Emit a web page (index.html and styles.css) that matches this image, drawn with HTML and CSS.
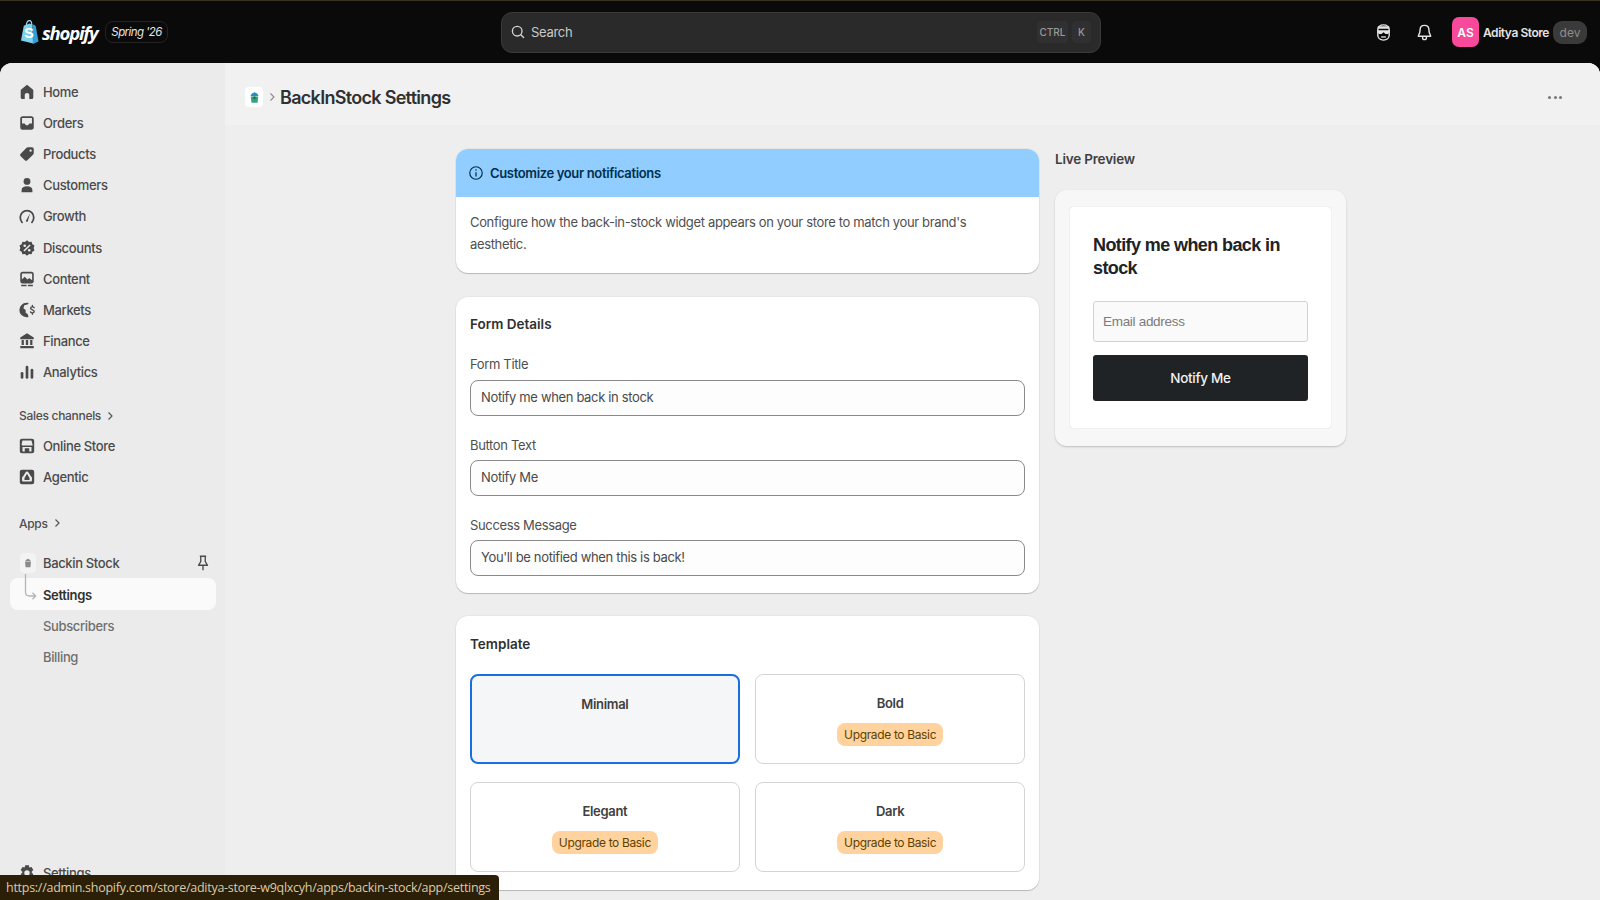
FILE: index.html
```html
<!DOCTYPE html>
<html lang="en">
<head>
  <meta charset="UTF-8" />
  <title>BackInStock Settings - Shopify</title>
  <link rel="stylesheet" href="styles.css">
</head>
<body>

  <!-- Top bar -->
  <header class="topbar">
    <div class="brand">
      <svg class="brand-bag" viewBox="0 0 20 26">
        <path fill="#7fd0ee" d="M1 22 4 6.500 10 4l3 1 1 20z"/>
        <path fill="#2f9fd6" d="M13 5l2.600.6 1 1.600L19.500 23 13.500 25.500z"/>
        <path fill="none" stroke="#9fdcf2" stroke-width="1.200" d="M6.500 6.500C6.800 3 8.400 1 10 1s2.400 2 2.400 4.500"/>
        <text x="4.500" y="19" class="brand-s">S</text>
      </svg>
      <span class="brand-name">shopify</span>
      <span class="brand-tag">Spring '26</span>
    </div>

    <div class="search">
      <svg class="search-icon" viewBox="0 0 20 20"><circle cx="9" cy="9" r="6" fill="none" stroke="#d4d4d4" stroke-width="1.700"/><path d="M13.500 13.500 17 17" stroke="#d4d4d4" stroke-width="1.700" stroke-linecap="round"/></svg>
      <span class="search-text">Search</span>
      <span class="key key-ctrl">CTRL</span>
      <span class="key">K</span>
    </div>

    <div class="top-actions">
      <svg class="top-icon top-icon-face" viewBox="0 0 20 20">
        <path fill="none" stroke="#e3e3e3" stroke-width="1.500" d="M4 7c0-3 2.500-5 6-5s6 2 6 5v6c0 3-2.500 5-6 5s-6-2-6-5z"/>
        <path fill="#e3e3e3" d="M4 3.500h12V6H4zM3.500 7.500h13v2.200l-2 1.800h-2.400L10 9.800l-2.100 1.700H5.500l-2-1.800z"/>
        <path fill="#e3e3e3" d="M7.500 14h5v1.400h-5z"/>
      </svg>
      <svg class="top-icon top-icon-bell" viewBox="0 0 20 20">
        <path fill="none" stroke="#e3e3e3" stroke-width="1.500" stroke-linejoin="round" d="M10 2.500c-3 0-4.700 2.200-4.700 5 0 3.500-1.800 5-1.800 6.500h13c0-1.500-1.800-3-1.800-6.500 0-2.800-1.700-5-4.700-5z"/>
        <path fill="none" stroke="#e3e3e3" stroke-width="1.500" d="M8 14.500v1.200c0 1 1 1.800 2 1.800s2-.8 2-1.800v-1.200"/>
      </svg>
      <span class="avatar">AS</span>
      <span class="store-name">Aditya Store</span>
      <span class="dev-pill">dev</span>
    </div>
  </header>

  <div class="shell">
    <!-- Sidebar -->
    <nav class="sidebar">
      <a class="nav-item"><svg class="nav-icon" viewBox="0 0 20 20"><path d="M10 2 3.500 7.200C3 7.600 3 8 3 8.600V16c0 1 .7 1.700 1.700 1.700H7.500V13c0-1 1-2 2.500-2s2.500 1 2.500 2v4.700h2.800c1 0 1.700-.7 1.700-1.700V8.600c0-.6 0-1-.5-1.400z"/></svg>Home</a>
      <a class="nav-item"><svg class="nav-icon" viewBox="0 0 20 20"><path fill-rule="evenodd" d="M5 2.500h10c1.400 0 2.500 1.100 2.500 2.500v10c0 1.400-1.100 2.500-2.500 2.500H5A2.500 2.500 0 0 1 2.500 15V5C2.500 3.600 3.600 2.500 5 2.500zM4.500 10.500h3c.4 1.200 1.300 2 2.500 2s2.100-.8 2.500-2h3V5c0-.3-.2-.5-.5-.5H5c-.3 0-.5.2-.5.5z"/></svg>Orders</a>
      <a class="nav-item"><svg class="nav-icon" viewBox="0 0 20 20"><path fill-rule="evenodd" d="M11 2.500h4.500c1.100 0 2 .9 2 2V9c0 .6-.2 1.100-.6 1.500l-6.500 6.500c-.8.8-2 .8-2.800 0L3 12.400c-.8-.8-.8-2 0-2.800l6.500-6.500c.4-.4 1-.6 1.500-.6zM14 7.500a1.300 1.300 0 1 0 0-2.600 1.300 1.300 0 0 0 0 2.600z"/></svg>Products</a>
      <a class="nav-item"><svg class="nav-icon" viewBox="0 0 20 20"><circle cx="10" cy="6" r="3.800"/><path d="M4 18v-2.500C4 13 6.500 11.500 10 11.500s6 1.500 6 4V18z"/></svg>Customers</a>
      <a class="nav-item"><svg class="nav-icon" viewBox="0 0 20 20"><path fill="none" stroke="#4a4a4a" stroke-width="2" stroke-linecap="round" d="M4.500 17C3 15.500 2.500 13.500 2.500 11.500a7.500 7.500 0 0 1 15 0c0 2-.5 4-2 5.500"/><path d="M13.500 7 10.800 16c-.3 1-2.300.5-2-.7z"/></svg>Growth</a>
      <a class="nav-item"><svg class="nav-icon" viewBox="0 0 20 20"><path fill-rule="evenodd" d="M10 1.500l2.300 1.700 2.800-.2.9 2.700 2.300 1.600-.9 2.700.9 2.700-2.300 1.600-.9 2.700-2.800-.2L10 18.500l-2.300-1.700-2.800.2-.9-2.700-2.300-1.600.9-2.700-.9-2.700L4 5.700l.9-2.700 2.800.2zM12.800 6 6 12.800 7.200 14 14 7.200zM7.500 9a1.500 1.500 0 1 0 0-3 1.500 1.500 0 0 0 0 3zm5 5a1.500 1.500 0 1 0 0-3 1.500 1.500 0 0 0 0 3z"/></svg>Discounts</a>
      <a class="nav-item"><svg class="nav-icon" viewBox="0 0 20 20"><path fill-rule="evenodd" d="M5 2h10c1.400 0 2.500 1.100 2.500 2.500v8c0 1.400-1.100 2.500-2.500 2.500H5a2.500 2.500 0 0 1-2.500-2.500v-8C2.500 3.100 3.600 2 5 2zm-.7 8.500 3.200-3 3 3 2-1.500 3.200 2.500V4.500c0-.3-.4-.7-.7-.7H5c-.3 0-.7.4-.7.7zM3.500 16.500h6V18h-6zm7.500 0h5.500V18H11z"/></svg>Content</a>
      <a class="nav-item"><svg class="nav-icon" viewBox="0 0 20 20"><path d="M9.500 2a8 8 0 0 0 0 16c.8 0 1.500-.1 2.200-.3l-1-3.200-2.200-1.500V10L6 8l1-3.300 3.500-.8L12 2.400C11.200 2.100 10.400 2 9.500 2z"/><path fill="none" stroke="#4a4a4a" stroke-width="1.500" stroke-linecap="round" d="M18 7.500c-.4-.8-1.200-1-2-1-1 0-2 .5-2 1.600 0 2.200 4 1.300 4 3.500 0 1-1 1.600-2 1.600-.9 0-1.700-.3-2-1M16 5v1.500M16 13.200v1.500"/></svg>Markets</a>
      <a class="nav-item"><svg class="nav-icon" viewBox="0 0 20 20"><path d="M10 1.500 2.500 6v2h15V6zM2.500 15.500h15V18h-15z"/><path d="M4 9h2.500v5.500H4zM8.700 9h2.600v5.500H8.700zM13.500 9H16v5.500h-2.500z"/></svg>Finance</a>
      <a class="nav-item"><svg class="nav-icon" viewBox="0 0 20 20"><rect x="3" y="10" width="3" height="7.500" rx="1.500"/><rect x="8.500" y="3" width="3" height="14.500" rx="1.500"/><rect x="14" y="6.500" width="3" height="11" rx="1.500"/></svg>Analytics</a>

      <div class="nav-heading nav-heading-sales">Sales channels <svg class="nav-chevron" viewBox="0 0 10 10"><path d="M3.500 1.500 7 5 3.500 8.500" fill="none" stroke="#555" stroke-width="1.200"/></svg></div>
      <a class="nav-item"><svg class="nav-icon" viewBox="0 0 20 20"><path fill-rule="evenodd" d="M4.500 2h11C17 2 18 3 18 4.500v11c0 1.500-1 2.500-2.500 2.500h-11C3 18 2 17 2 15.500v-11C2 3 3 2 4.500 2zM5 4l-1 4c0 1 .8 1.500 1.500 1.500h9C16.200 9.500 17 9 16 8l-1-4zm0 7v5h2.500v-3.500h5V16H15v-5z"/></svg>Online Store</a>
      <a class="nav-item nav-item-tight"><svg class="nav-icon" viewBox="0 0 20 20"><path fill-rule="evenodd" d="M4.500 2h11C17 2 18 3 18 4.500v11c0 1.500-1 2.500-2.500 2.500h-11C3 18 2 17 2 15.500v-11C2 3 3 2 4.500 2zM10 4a2 2 0 0 0-1.800 1.200L5.500 9.500a1.500 1.500 0 0 0-1 1.500v2.500c0 1 .7 1.500 1.500 1.500h8c.8 0 1.500-.5 1.500-1.500V11a1.500 1.500 0 0 0-1-1.500l-2.700-4.300A2 2 0 0 0 10 4zm0 2.500L12.800 11v2.300H7.200V11z"/></svg>Agentic</a>

      <div class="nav-heading nav-heading-apps">Apps <svg class="nav-chevron" viewBox="0 0 10 10"><path d="M3.500 1.500 7 5 3.500 8.500" fill="none" stroke="#555" stroke-width="1.200"/></svg></div>
      <a class="nav-item nav-item-app">
        <span class="app-thumb"><svg viewBox="0 0 20 20"><path fill="#8a8a8a" d="M5 8h10l-1 9H6zM7 4.500 10 3l3 1.500L15 7H5z"/></svg></span>
        Backin Stock
        <svg class="pin" viewBox="0 0 20 20"><path fill="none" stroke="#4a4a4a" stroke-width="1.500" stroke-linejoin="round" d="M6.500 2.500h7M7.500 2.500v6L5 12.500h10l-2.500-4v-6M10 12.500V18"/></svg>
      </a>
      <a class="nav-item nav-sub nav-sub-active">
        <svg class="tree" viewBox="0 0 14 28"><path d="M1.500 0v18c0 3 1.500 4 4 4h6M8.500 18.800l3.200 3.200-3.200 3.200" fill="none" stroke="#b5b5b5" stroke-width="1.300"/></svg>
        Settings
      </a>
      <a class="nav-item nav-sub">Subscribers</a>
      <a class="nav-item nav-sub">Billing</a>

      <a class="nav-item nav-bottom"><svg class="nav-icon" viewBox="0 0 20 20"><path fill-rule="evenodd" d="M8 1.500h4l.6 2.500 2.400-.8 2 3.500-1.800 1.800v1l1.800 1.800-2 3.500-2.400-.8-.6 2.500H8l-.6-2.500-2.400.8-2-3.500 1.800-1.800v-1L3 6.700l2-3.500 2.400.8zM10 13a3 3 0 1 0 0-6 3 3 0 0 0 0 6z"/></svg>Settings</a>
    </nav>

    <!-- Main area -->
    <main class="main">
      <div class="page-header">
        <span class="header-thumb">
          <svg viewBox="0 0 20 20"><path fill="#2fa37c" d="M5 8.500h10l-1 8.500H6z"/><path fill="#2a8fc0" d="M6.500 4.500 10 3l3.500 1.500L15.500 8h-11z"/><path fill="#1e6a6a" d="M8.500 8.500h3V12h-3z"/></svg>
        </span>
        <svg class="crumb" viewBox="0 0 10 10"><path d="M3.500 1.500 7 5 3.500 8.500" fill="none" stroke="#8a8a8a" stroke-width="1.100"/></svg>
        <h1>BackInStock Settings</h1>
        <span class="more"><i></i><i></i><i></i></span>
      </div>

      <div class="content">
        <div class="col-form">
          <section class="card card-banner">
            <div class="banner-head">
              <svg class="info" viewBox="0 0 20 20"><circle cx="10" cy="10" r="7.800" fill="none" stroke="#00304f" stroke-width="1.500"/><path d="M10 9v5.500" stroke="#00304f" stroke-width="1.600"/><circle cx="10" cy="6.300" r="1" fill="#00304f"/></svg>
              <span>Customize your notifications</span>
            </div>
            <p class="banner-body">Configure how the back-in-stock widget appears on your store to match your brand's aesthetic.</p>
          </section>

          <section class="card card-form">
            <h2>Form Details</h2>
            <label class="field-label">Form Title</label>
            <input class="field" type="text" value="Notify me when back in stock">
            <label class="field-label">Button Text</label>
            <input class="field" type="text" value="Notify Me">
            <label class="field-label">Success Message</label>
            <input class="field" type="text" value="You'll be notified when this is back!">
          </section>

          <section class="card card-template">
            <h2>Template</h2>
            <div class="tiles">
              <div class="tile tile-selected"><strong>Minimal</strong></div>
              <div class="tile"><strong>Bold</strong><span class="upgrade">Upgrade to Basic</span></div>
              <div class="tile"><strong>Elegant</strong><span class="upgrade">Upgrade to Basic</span></div>
              <div class="tile"><strong>Dark</strong><span class="upgrade">Upgrade to Basic</span></div>
            </div>
          </section>
        </div>

        <aside class="col-preview">
          <h3>Live Preview</h3>
          <div class="preview-card">
            <div class="widget">
              <h4>Notify me when back in stock</h4>
              <input class="widget-input" type="text" placeholder="Email address">
              <button class="widget-button">Notify Me</button>
            </div>
          </div>
        </aside>
      </div>
    </main>
  </div>

  <!-- Browser link preview -->
  <div class="status-link">https://admin.shopify.com/store/aditya-store-w9qlxcyh/apps/backin-stock/app/settings</div>

</body>
</html>
```

FILE: styles.css
```css
/* Base styles */
* {
  margin: 0;
  padding: 0;
  box-sizing: border-box;
}

html,
body {
  height: 100%;
  overflow: hidden;
}

body {
  background-color: #0a0a0a;
  font-family: Inter, "Noto Sans", sans-serif;
  color: #303030;
  display: flex;
  flex-direction: column;
}

/* Top bar */
.topbar {
  height: 63px;
  flex-shrink: 0;
  border-top: 1px solid #3a3322;
  background-color: #0a0a0a;
  display: flex;
  align-items: center;
  padding-left: 20px;
}

.brand {
  width: 481px;
  display: flex;
  align-items: center;
}

.brand-bag {
  width: 19px;
  height: 26px;
}

.brand-s {
  font-family: "Liberation Sans", sans-serif;
  font-size: 15px;
  font-weight: 700;
  fill: #ffffff;
}

.brand-name {
  margin-left: 3px;
  font-family: "Open Sans", sans-serif;
  font-size: 18.5px;
  font-weight: 700;
  font-style: italic;
  letter-spacing: -1.2px;
  color: #ffffff;
}

.brand-tag {
  margin-left: 8px;
  height: 22px;
  padding: 0 5px;
  display: flex;
  align-items: center;
  border: 1px solid #232323;
  border-radius: 8px;
  font-size: 11.5px;
  font-style: italic;
  letter-spacing: -0.6px;
  color: #e3e3e3;
}

.search {
  width: 600px;
  height: 41px;
  background-color: #2a2a2a;
  border: 1px solid #3a3a3a;
  border-radius: 11px;
  display: flex;
  align-items: center;
  padding: 0 9px 0 8px;
}

.search-icon {
  width: 16px;
  height: 16px;
}

.search-text {
  margin-left: 5px;
  flex: 1;
  font-size: 13px;
  letter-spacing: -0.3px;
  color: #c9c9c9;
}

.key {
  height: 22px;
  min-width: 19px;
  margin-left: 4px;
  padding: 0 4px;
  display: flex;
  align-items: center;
  justify-content: center;
  background-color: #303030;
  border-radius: 4px;
  font-size: 10px;
  font-weight: 500;
  color: #9a9a9a;
}

.key-ctrl {
  width: 31px;
}

.top-actions {
  flex: 1;
  display: flex;
  align-items: center;
  padding-left: 273px;
}

.top-icon {
  width: 19px;
  height: 19px;
}

.top-icon-bell {
  margin-left: 22px;
}

.avatar {
  width: 27px;
  height: 30px;
  margin-left: 18px;
  background-color: #f8499a;
  border-radius: 7px;
  display: flex;
  align-items: center;
  justify-content: center;
  font-size: 12px;
  font-weight: 600;
  color: #ffffff;
}

.store-name {
  margin-left: 4px;
  font-size: 12px;
  font-weight: 600;
  letter-spacing: -0.45px;
  color: #e3e3e3;
  white-space: nowrap;
}

.dev-pill {
  margin-left: 4px;
  width: 34px;
  height: 23px;
  background-color: #3a3a3a;
  border-radius: 9px;
  display: flex;
  align-items: center;
  justify-content: center;
  font-size: 12px;
  color: #8f8f8f;
}

/* Shell */
.shell {
  flex: 1;
  display: flex;
  min-height: 0;
  border-radius: 12px 12px 0 0;
  overflow: hidden;
  background-color: #f0f0f0;
}

/* Sidebar */
.sidebar {
  width: 225px;
  flex-shrink: 0;
  background-color: #ebebeb;
  padding: 13px 0 11px 0;
  display: flex;
  flex-direction: column;
}

.nav-item {
  height: 31.2px;
  flex-shrink: 0;
  display: flex;
  align-items: center;
  padding-left: 18px;
  font-size: 13px;
  font-weight: 500;
  letter-spacing: -0.35px;
  color: #4a4a4a;
  position: relative;
}

.nav-item-tight {
  padding-bottom: 2px;
}

.nav-icon {
  width: 18px;
  height: 18px;
  margin-right: 7px;
  fill: #4a4a4a;
  flex-shrink: 0;
}

.nav-heading {
  height: 20px;
  flex-shrink: 0;
  padding-left: 19px;
  display: flex;
  align-items: center;
  font-size: 12px;
  font-weight: 500;
  letter-spacing: -0.3px;
  color: #4f4f4f;
}

.nav-heading-sales {
  margin-top: 18px;
  margin-bottom: 5px;
}

.nav-heading-apps {
  margin-top: 20px;
  margin-bottom: 14px;
}

.nav-chevron {
  width: 10px;
  height: 10px;
  margin-left: 4px;
}

.app-thumb {
  width: 16px;
  height: 20px;
  margin-left: 2px;
  margin-right: 7px;
  background-color: #f3f3f3;
  border-radius: 4px;
  display: flex;
  align-items: center;
  justify-content: center;
}

.app-thumb svg {
  width: 12px;
  height: 12px;
}

.pin {
  position: absolute;
  left: 194px;
  width: 18px;
  height: 18px;
}

.nav-sub {
  padding-left: 43px;
  color: #6f6f6f;
}

.nav-sub-active {
  margin-left: 10px;
  margin-bottom: 1px;
  width: 206px;
  padding-left: 33px;
  padding-top: 2px;
  background-color: #fafafa;
  border-radius: 8px;
  font-weight: 600;
  color: #303030;
}

.tree {
  position: absolute;
  left: 14px;
  top: -4px;
  width: 14px;
  height: 28px;
}

.nav-bottom {
  margin-top: auto;
}

/* Main */
.main {
  flex: 1;
  min-width: 0;
  background-color: #eeeeee;
}

.page-header {
  height: 62px;
  padding: 6px 38px 0 20px;
  background-color: #f1f1f1;
  display: flex;
  align-items: center;
}

.header-thumb {
  width: 18px;
  height: 20px;
  background-color: #ffffff;
  border-radius: 4px;
  display: flex;
  align-items: center;
  justify-content: center;
}

.header-thumb svg {
  width: 15px;
  height: 15px;
}

.crumb {
  width: 10px;
  height: 10px;
  margin: 0 3px 0 4px;
}

.page-header h1 {
  flex: 1;
  font-size: 18px;
  font-weight: 600;
  letter-spacing: -0.7px;
  color: #303030;
}

.more {
  display: flex;
  gap: 2.5px;
}

.more i {
  width: 3px;
  height: 3px;
  border-radius: 50%;
  background-color: #777777;
}

.content {
  padding: 24px 0 0 231px;
  display: flex;
  gap: 16px;
}

.col-form {
  width: 583px;
  display: flex;
  flex-direction: column;
  gap: 23.5px;
}

.card {
  background-color: #ffffff;
  border-radius: 12px;
  box-shadow: 0 1px 1px rgba(0, 0, 0, 0.2), 0 0 0 1px rgba(0, 0, 0, 0.03);
  overflow: hidden;
}

.banner-head {
  height: 48px;
  background-color: #91cdff;
  display: flex;
  align-items: center;
  padding-left: 12px;
  font-size: 13px;
  font-weight: 600;
  letter-spacing: -0.35px;
  color: #00304f;
}

.info {
  width: 16px;
  height: 16px;
  margin-right: 6px;
}

.banner-body {
  padding: 14px 14px 18px;
  font-size: 13px;
  letter-spacing: -0.35px;
  line-height: 22px;
  color: #4f4f4f;
}

.card h2 {
  font-size: 13.5px;
  font-weight: 600;
  line-height: 20px;
  color: #303030;
}

.card-form {
  height: 296px;
  padding: 17px 14px 0;
}

.field-label {
  display: block;
  margin-top: 20px;
  margin-bottom: 6px;
  font-size: 13px;
  letter-spacing: -0.35px;
  line-height: 18px;
  color: #4f4f4f;
}

.card-form h2 + .field-label {
  margin-top: 21px;
  margin-bottom: 7px;
}

.field {
  display: block;
  width: 100%;
  height: 36px;
  padding: 0 10px 2px;
  background-color: #fdfdfd;
  border: 1px solid #8a8a8a;
  border-radius: 8px;
  font-family: Inter, sans-serif;
  font-size: 13px;
  letter-spacing: -0.35px;
  color: #4a4a4a;
}

.card-template {
  height: 274px;
  padding: 18px 14px 0;
}

.tiles {
  margin-top: 20px;
  display: grid;
  grid-template-columns: 1fr 1fr;
  grid-auto-rows: 90px;
  gap: 18px 15.5px;
}

.tile {
  border: 1px solid #d4d4d4;
  border-radius: 8px;
  padding-top: 19px;
  display: flex;
  flex-direction: column;
  align-items: center;
  gap: 11px;
}

.tile strong {
  font-size: 13px;
  font-weight: 600;
  letter-spacing: -0.3px;
  line-height: 18px;
  color: #404040;
}

.tile-selected {
  border: 2px solid #1a6fe0;
  background-color: #f5f6f8;
}

.upgrade {
  height: 23px;
  padding: 0 7px;
  display: flex;
  align-items: center;
  background-color: #ffd29e;
  border-radius: 8px;
  font-size: 12px;
  letter-spacing: -0.35px;
  color: #5e4200;
}

/* Live preview */
.col-preview {
  width: 291px;
}

.col-preview h3 {
  font-size: 13.5px;
  font-weight: 600;
  letter-spacing: -0.2px;
  line-height: 20px;
  color: #404040;
  margin-bottom: 21px;
}

.preview-card {
  height: 256px;
  background-color: #f7f7f7;
  border-radius: 12px;
  box-shadow: 0 1px 2px rgba(0, 0, 0, 0.2);
  padding: 17px 15px;
}

.widget {
  height: 221px;
  background-color: #ffffff;
  border-radius: 3px;
  box-shadow: 0 0 1px rgba(0, 0, 0, 0.25);
  padding: 27px 23px 0;
}

.widget h4 {
  font-family: "Liberation Sans", Arial, sans-serif;
  font-size: 18px;
  font-weight: 700;
  letter-spacing: -0.6px;
  line-height: 23px;
  color: #202326;
}

.widget-input {
  display: block;
  width: 100%;
  height: 41px;
  margin-top: 21px;
  padding: 0 9px;
  background-color: #fafafa;
  border: 1px solid #d2d2d2;
  border-radius: 3px;
  font-family: "Liberation Sans", Arial, sans-serif;
  font-size: 13.5px;
  letter-spacing: -0.3px;
}

.widget-input::placeholder {
  color: #7b7b7b;
}

.widget-button {
  display: block;
  width: 100%;
  height: 46px;
  margin-top: 13px;
  background-color: #202326;
  border: none;
  border-radius: 3px;
  font-family: Inter, sans-serif;
  font-size: 13.5px;
  font-weight: 500;
  letter-spacing: -0.3px;
  color: #f1f1f1;
}

/* Link preview overlay */
.status-link {
  position: absolute;
  left: 0;
  bottom: 0;
  width: 499px;
  height: 25px;
  padding-left: 6px;
  display: flex;
  align-items: center;
  background-color: #2b1f08;
  border-radius: 0 4px 0 0;
  font-family: "Open Sans", sans-serif;
  font-size: 12.5px;
  letter-spacing: -0.27px;
  color: #d9cba8;
  white-space: nowrap;
}
```
